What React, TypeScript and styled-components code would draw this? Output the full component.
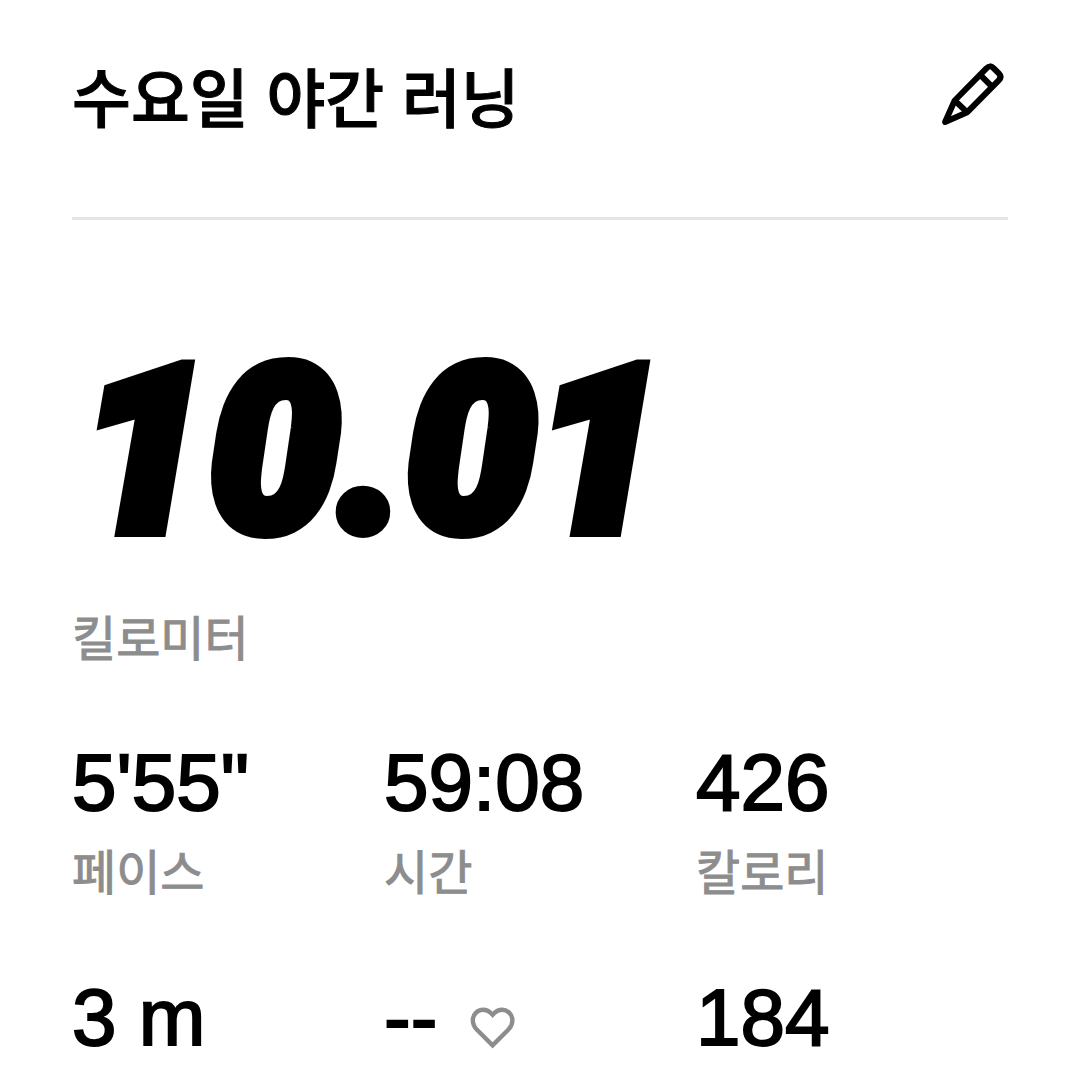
import React from 'react';
import styled, { createGlobalStyle } from 'styled-components';

const Global = createGlobalStyle`
  * { box-sizing: border-box; }
  body {
    margin: 0;
    background: #fff;
    color: #000;
    font-family: "Liberation Sans", "Noto Sans CJK KR", sans-serif;
  }
`;

const Page = styled.main`
  padding: 0 72px;
`;

const Header = styled.header`
  display: flex;
  align-items: center;
  justify-content: space-between;
  padding: 52px 0 69px;
  border-bottom: 3px solid #e5e5e5;
`;

const Title = styled.h1`
  margin: 0;
  font-size: 64px;
  line-height: 96px;
  font-weight: 500;
  -webkit-text-stroke: 1px #000;
`;

const EditButton = styled.button`
  display: flex;
  padding: 0 0 12px;
  border: 0;
  background: none;
  color: inherit;
  cursor: pointer;
`;

const Distance = styled.section`
  padding-top: 112px;
`;

const DistanceValue = styled.p`
  margin: 0 0 40px;
  padding-left: 8px;
  font: italic 900 230px/240px Roboto, sans-serif;
  -webkit-text-stroke: 14px #000;
`;

const Label = styled.p`
  margin: 0;
  color: #8d8d8d;
  font-size: 48px;
  line-height: 56px;
  -webkit-text-stroke: 1px #8d8d8d;
`;

const Stats = styled.section`
  display: grid;
  grid-template-columns: repeat(3, 1fr);
  row-gap: 68px;
  padding-top: 67px;
`;

const Stat = styled.div`
  display: flex;
  flex-direction: column;
  gap: 15px;
`;

const Value = styled.p`
  display: flex;
  align-items: flex-end;
  gap: 32px;
  margin: 0;
  font-size: 80px;
  line-height: 96px;
  -webkit-text-stroke: 2px #000;
`;

const HeartIcon = styled.svg`
  width: 48px;
  height: 48px;
  margin-bottom: 14px;
  color: #8d8d8d;
`;

function Pencil() {
  return (
    <svg width="72" height="72" viewBox="0 0 72 72" fill="none" stroke="currentColor" strokeWidth="6" strokeLinejoin="round" aria-hidden="true">
      <path d="M18.7 42.5 50.6 10.2Q54 6.6 57.5 10.1L62.8 15.4Q66.2 18.8 62.7 22.4L31.3 54.2 9.1 64Z" />
      <path d="M44.2 16.8 56.2 28.8M18.7 42.5 31 54.2" />
    </svg>
  );
}

function Heart() {
  return (
    <HeartIcon viewBox="0 0 48 48" fill="none" stroke="currentColor" strokeWidth="4.4" role="img" aria-label="심박수">
      <path d="M23.6 10.8 21.8 9A10.6 10.6 0 0 0 14.2 5.8 10.4 10.4 0 0 0 3.8 16.2C3.8 19.5 5.2 23 8.2 26L23.6 41.3 39 26C42 23 43.4 19.5 43.4 16.2A10.4 10.4 0 0 0 33 5.8 10.6 10.6 0 0 0 25.4 9Z" />
    </HeartIcon>
  );
}

type StatItem = { value: string; label?: string; heart?: boolean };

const stats: StatItem[] = [
  { value: `5'55"`, label: '페이스' },
  { value: '59:08', label: '시간' },
  { value: '426', label: '칼로리' },
  { value: '3 m' },
  { value: '--', heart: true },
  { value: '184' },
];

export default function App() {
  return (
    <Page>
      <Global />
      <Header>
        <Title>수요일 야간 러닝</Title>
        <EditButton type="button" aria-label="편집">
          <Pencil />
        </EditButton>
      </Header>
      <Distance>
        <DistanceValue>10.01</DistanceValue>
        <Label>킬로미터</Label>
      </Distance>
      <Stats>
        {stats.map((s) => (
          <Stat key={s.value}>
            <Value>
              {s.value}
              {s.heart && <Heart />}
            </Value>
            {s.label && <Label>{s.label}</Label>}
          </Stat>
        ))}
      </Stats>
    </Page>
  );
}
